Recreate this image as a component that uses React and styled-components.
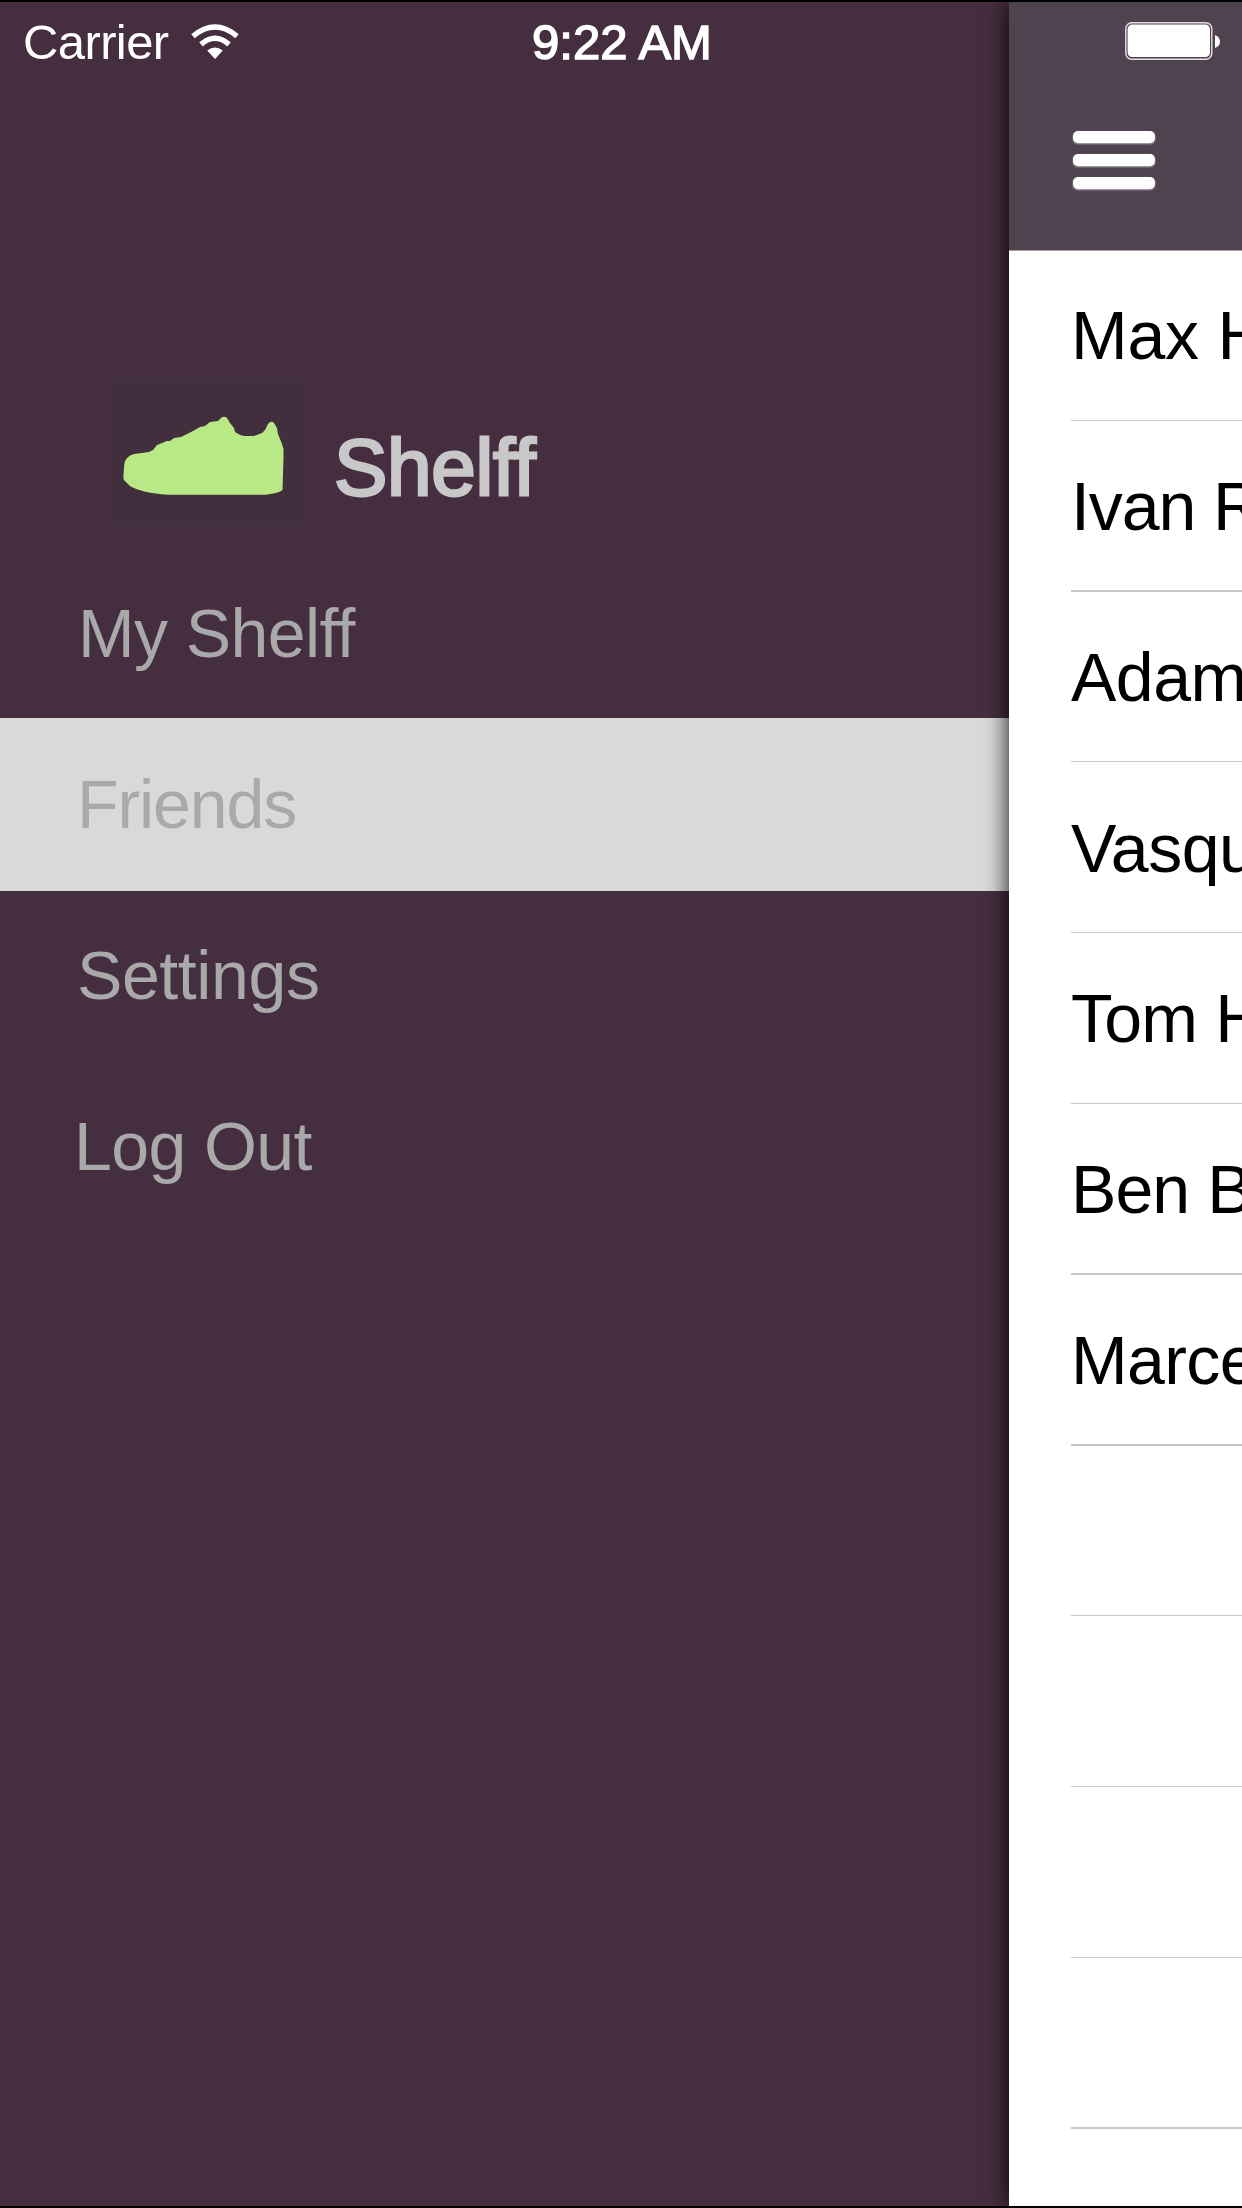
import React from "react";
import styled, { createGlobalStyle } from "styled-components";

const GlobalStyle = createGlobalStyle`
  * { box-sizing: border-box; }
  body {
    margin: 0;
    background: #000;
    font-family: "Liberation Sans", Arial, Helvetica, sans-serif;
    font-variant-ligatures: none;
  }
`;

const Screen = styled.div`
  position: relative;
  width: 1242px;
  height: 2208px;
  overflow: hidden;
  display: flex;
  border-top: 2px solid #000;
  border-bottom: 2px solid #000;
  background: #452e3f;
`;

const StatusBar = styled.header`
  position: absolute;
  z-index: 2;
  top: 0;
  left: 0;
  right: 0;
  height: 80px;
  display: grid;
  grid-template-columns: 1fr auto 1fr;
  align-items: center;
  padding: 0 21px 0 23px;
  color: #fff;
  font-size: 49px;
  line-height: 80px;
`;

const Carrier = styled.div`
  display: flex;
  align-items: center;
  gap: 22px;
  letter-spacing: -0.6px;
`;

const Clock = styled.div`
  -webkit-text-stroke: 1.5px #fff;
`;

const Battery = styled.svg`
  justify-self: end;
  display: block;
  margin-bottom: 2px;
`;

const Drawer = styled.nav`
  width: 1009px;
  flex: none;
  padding-top: 377px;
`;

const Brand = styled.div`
  display: flex;
  height: 168px;
`;

const Logo = styled.svg`
  flex: none;
  margin-left: 109px;
  width: 193px;
  height: 146px;
  background: #412f3e;
`;

const BrandName = styled.h1`
  margin: 44px 0 0 32px;
  font-size: 80px;
  font-weight: 400;
  line-height: 90px;
  color: #c8c8c8;
  letter-spacing: -0.3px;
  -webkit-text-stroke: 2.8px #c8c8c8;
`;

const MenuItem = styled.div`
  height: ${(p) => (p.$active ? 173 : 171)}px;
  margin-bottom: ${(p) => (p.$active ? -2 : 0)}px;
  padding-left: ${(p) => p.$indent}px;
  line-height: 173px;
  font-size: 68px;
  letter-spacing: ${(p) => p.$track}px;
  color: #a9a9a9;
  background: ${(p) => (p.$active ? "#d9d9d9" : "transparent")};
`;

const Panel = styled.main`
  flex: none;
  width: 233px;
  background: #fff;
  box-shadow: 0 0 22px rgba(0, 0, 0, 0.95);
`;

const NavBar = styled.div`
  height: 249px;
  padding: 129px 0 0 64px;
  background: #4f4350;
  border-bottom: 1px solid #a7a1a7;
`;

const MenuIcon = styled.div`
  width: 82px;
  display: flex;
  flex-direction: column;
  gap: 11px;
`;

const Bar = styled.span`
  height: 12px;
  border-radius: 5px;
  background: #fff;
  box-shadow: 0 1px 2px rgba(255, 255, 255, 0.6);
`;

const Row = styled.div`
  height: ${(p) => p.$height}px;
  margin-left: 62px;
  border-bottom: ${(p) => p.$line}px solid #c8c7cc;
  font-size: 68px;
  line-height: ${(p) => p.$leading || 170}px;
  letter-spacing: ${(p) => p.$track}px;
  color: #000;
  white-space: nowrap;
`;

const menu = [
  { label: "My Shelff", indent: 78, track: -0.6 },
  { label: "Friends", indent: 77, track: -1.1, active: true },
  { label: "Settings", indent: 77, track: -0.4 },
  { label: "Log Out", indent: 74, track: -0.6 },
];

const friends = [
  { name: "Max H", height: 170, line: 1, leading: 168, track: -0.2 },
  { name: "Ivan R", height: 171, line: 2, track: -1.1 },
  { name: "Adam", height: 170, line: 1, track: -0.5 },
  { name: "Vasqu", height: 171, line: 1, leading: 172, track: -0.5 },
  { name: "Tom H", height: 171, line: 1, track: -0.8 },
  { name: "Ben B", height: 171, line: 2, track: -0.9 },
  { name: "Marce", height: 171, line: 2, track: -0.6 },
  { name: "", height: 170, line: 1 },
  { name: "", height: 171, line: 1 },
  { name: "", height: 171, line: 1 },
  { name: "", height: 171, line: 2 },
];

export default function App() {
  return (
    <>
      <GlobalStyle />
      <Screen>
        <StatusBar>
          <Carrier>
            Carrier
            <svg width="48" height="37" viewBox="0 0 48 37">
              <g fill="none" stroke="#fff" strokeWidth="5.4">
                <path d="M2 12.2Q24-6.2 46 12.2" />
                <path d="M10 20.4Q24 8.2 38 20.4" />
              </g>
              <path d="M16.2 26.6Q24 20.6 31.8 26.6L24 35Z" fill="#fff" />
            </svg>
          </Carrier>
          <Clock>9:22 AM</Clock>
          <Battery width="96" height="38" viewBox="0 0 96 38">
            <rect x="0.8" y="0.8" width="86" height="36.4" rx="6" fill="none" stroke="#fff" strokeOpacity=".85" strokeWidth="1.4" />
            <rect x="2.6" y="2.6" width="82.4" height="32.4" rx="4.5" fill="#fff" />
            <path d="M90 13Q95 15 95 19.5T90 26Z" fill="#fff" />
          </Battery>
        </StatusBar>
        <Drawer>
          <Brand>
            <Logo viewBox="109 379 193 146">
              <path
                fill="#b8e986"
                d="M124 468C124 459 128 456 134 454L149 452L153 450L157 445L162 443L167 441L170 441L174 438L181 437L187 434L193 431L200 427L205 426L210 422L218 421L221 418Q224 415.500 227 418L230 423L234 428L235 432Q239 435 244 436H254L262 433L265 430L268 424Q271 420 274 423L277 428L278 434L282 444L283.500 449V458L282.500 490Q279 493 266 494.700H168Q142 493 130 486L124 480L123.300 477Z"
              />
            </Logo>
            <BrandName>Shelff</BrandName>
          </Brand>
          {menu.map((m) => (
            <MenuItem key={m.label} $active={m.active} $indent={m.indent} $track={m.track}>
              {m.label}
            </MenuItem>
          ))}
        </Drawer>
        <Panel>
          <NavBar>
            <MenuIcon>
              <Bar />
              <Bar />
              <Bar />
            </MenuIcon>
          </NavBar>
          {friends.map((f, i) => (
            <Row key={i} $height={f.height} $line={f.line} $leading={f.leading} $track={f.track || 0}>
              {f.name}
            </Row>
          ))}
        </Panel>
      </Screen>
    </>
  );
}
